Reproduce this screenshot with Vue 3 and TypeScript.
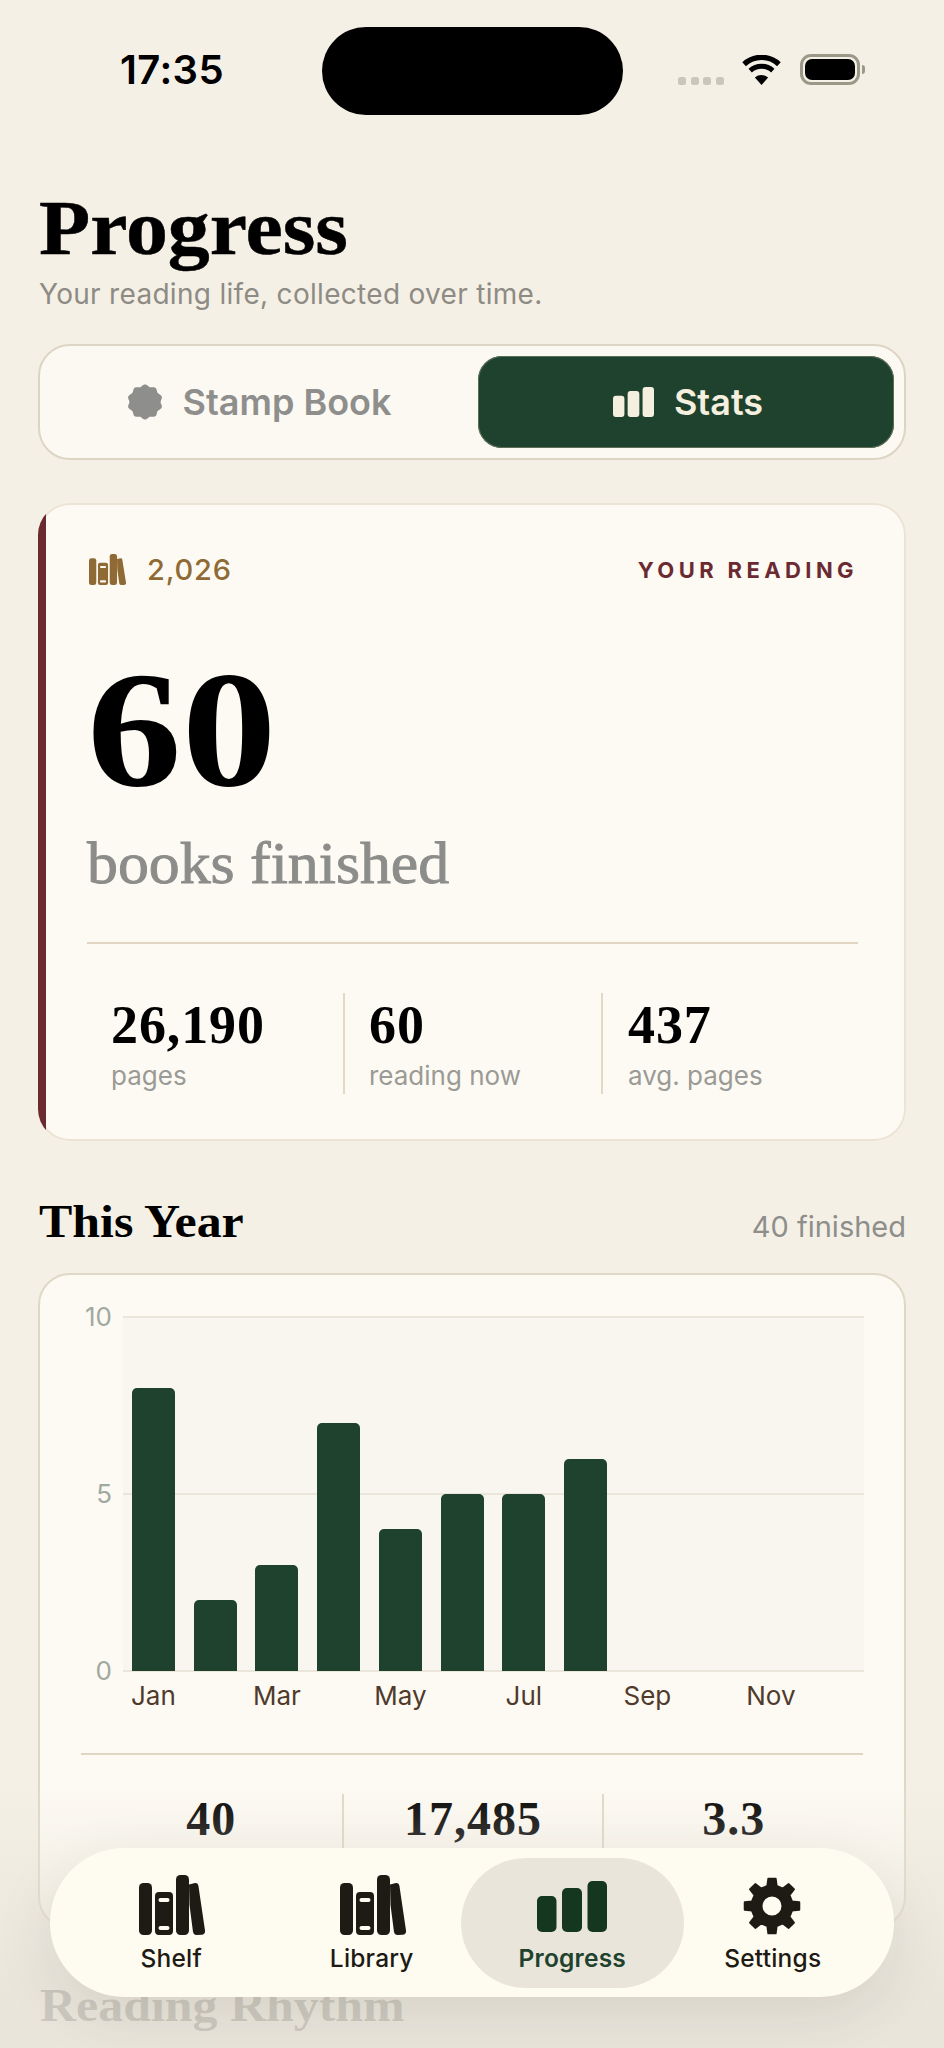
<script setup lang="ts">
import { computed } from 'vue'

const heroStats = [
  { value: '26,190', label: 'pages' },
  { value: '60', label: 'reading now' },
  { value: '437', label: 'avg. pages' },
]
const yearStats = [
  { value: '40', label: 'books' },
  { value: '17,485', label: 'pages' },
  { value: '3.3', label: 'per month' },
]
const months = ['Jan', '', 'Mar', '', 'May', '', 'Jul', '', 'Sep', '', 'Nov', '']
const counts = [8, 2, 3, 7, 4, 5, 5, 6, 0, 0, 0, 0]
const yTicks = ['10', '5', '0']

const sealPath = computed(() => {
  const pts: string[] = []
  const n = 160
  for (let i = 0; i < n; i++) {
    const a = (i / n) * Math.PI * 2 - Math.PI / 2
    const r = 16.6 + 1.0 * Math.cos(10 * (a + Math.PI / 2))
    pts.push(`${(18 + r * Math.cos(a)).toFixed(2)} ${(18 + r * Math.sin(a)).toFixed(2)}`)
  }
  return 'M' + pts.join('L') + 'Z'
})

const gearPath = computed(() => {
  const cx = 29
  const cy = 29
  const rOut = 27.5
  const rIn = 20.5
  const teeth = 8
  const step = (Math.PI * 2) / teeth
  let d = ''
  for (let i = 0; i < teeth; i++) {
    const c = i * step - Math.PI / 2
    const seq: [number, number][] = [
      [rIn, c - step * 0.29],
      [rOut, c - step * 0.17],
      [rOut, c + step * 0.17],
      [rIn, c + step * 0.29],
    ]
    for (const [r, a] of seq) {
      const x = (cx + r * Math.cos(a)).toFixed(2)
      const y = (cy + r * Math.sin(a)).toFixed(2)
      d += (d === '' ? 'M' : 'L') + x + ' ' + y
    }
  }
  d += 'Z'
  const h = 10.5
  d += `M${cx - h} ${cy}a${h} ${h} 0 1 0 ${h * 2} 0a${h} ${h} 0 1 0 ${-h * 2} 0Z`
  return d
})
</script>

<template>
  <div class="screen">
    <svg class="defs" width="0" height="0" aria-hidden="true">
      <symbol id="books" viewBox="0 0 66 60" preserveAspectRatio="none">
        <rect x="0" y="8" width="13" height="52" rx="4.5" />
        <path fill-rule="evenodd" d="M20 17h10a4 4 0 0 1 4 4v35a4 4 0 0 1-4 4H20a4 4 0 0 1-4-4V21a4 4 0 0 1 4-4ZM21.5 23a1.5 1.5 0 0 0 0 4h7a1.5 1.5 0 0 0 0-4ZM21.5 51a1.5 1.5 0 0 0 0 4h7a1.5 1.5 0 0 0 0-4Z" />
        <rect x="37" y="0" width="13" height="60" rx="4.5" />
        <path d="M50 9.5l6-1.4a3 3 0 0 1 3.4 2.6L66 55.6a3.6 3.6 0 0 1-3.3 4.2l-5 .2a3.5 3.5 0 0 1-3.7-3L50.5 30Z" />
      </symbol>
      <symbol id="bars" viewBox="0 0 70 51" preserveAspectRatio="none">
        <rect x="0" y="15" width="19.5" height="36" rx="5" />
        <rect x="25" y="7" width="20" height="44" rx="5" />
        <rect x="50.5" y="0" width="19.5" height="51" rx="5" />
      </symbol>
    </svg>

    <header class="status">
      <div class="time">17:35</div>
      <div class="island"></div>
      <div class="indicators">
        <div class="signal"><i></i><i></i><i></i><i></i></div>
        <svg class="wifi" viewBox="0 0 40 30">
          <path d="M20 30 13.4 22.6a10 10 0 0 1 13.2 0Z" fill="#000" />
          <path d="M8.7 15.6a17 17 0 0 1 22.6 0" fill="none" stroke="#000" stroke-width="5" />
          <path d="M2.6 9.2a25.6 25.6 0 0 1 34.8 0" fill="none" stroke="#000" stroke-width="5.4" />
        </svg>
        <div class="battery"><span class="cell"></span></div>
        <span class="nub"></span>
      </div>
    </header>

    <main class="page">
      <h1 class="title">Progress</h1>
      <p class="subtitle">Your reading life, collected over time.</p>

      <div class="segment">
        <div class="seg-item">
          <svg class="seg-icon" viewBox="0 0 36 36"><path :d="sealPath" fill="currentColor" /></svg>
          <span>Stamp Book</span>
        </div>
        <div class="seg-item active">
          <svg class="seg-bars"><use href="#bars" /></svg>
          <span>Stats</span>
        </div>
      </div>

      <section class="hero">
        <div class="hero-top">
          <div class="year">
            <svg class="year-icon"><use href="#books" /></svg>
            <span>2,026</span>
          </div>
          <div class="eyebrow">YOUR READING</div>
        </div>
        <div class="big">60</div>
        <div class="big-label">books finished</div>
        <div class="rule"></div>
        <div class="hero-stats">
          <div v-for="s in heroStats" :key="s.label" class="hero-stat">
            <div class="hero-value">{{ s.value }}</div>
            <div class="hero-label">{{ s.label }}</div>
          </div>
        </div>
      </section>

      <div class="section-head">
        <h2 class="section-title">This Year</h2>
        <span class="section-meta">40 finished</span>
      </div>

      <section class="chart-card">
        <div class="chart">
          <div class="y-axis">
            <span v-for="t in yTicks" :key="t">{{ t }}</span>
          </div>
          <div class="plot">
            <i class="line l1"></i><i class="line l2"></i><i class="line l3"></i>
            <div class="bars">
              <div v-for="(c, i) in counts" :key="i" class="slot">
                <div class="bar" :style="{ height: (c / 10) * 100 + '%' }"></div>
              </div>
            </div>
          </div>
        </div>
        <div class="months">
          <span v-for="(m, i) in months" :key="i" class="month">{{ m }}</span>
        </div>
        <div class="rule chart-rule"></div>
        <div class="year-stats">
          <div v-for="s in yearStats" :key="s.value" class="year-stat">
            <div class="year-value">{{ s.value }}</div>
            <div class="year-label">{{ s.label }}</div>
          </div>
        </div>
      </section>

      <h2 class="section-title rhythm">Reading Rhythm</h2>
    </main>

    <div class="fade"></div>

    <nav class="tabbar">
      <div class="tab">
        <svg class="tab-books"><use href="#books" /></svg>
        <span>Shelf</span>
      </div>
      <div class="tab">
        <svg class="tab-books"><use href="#books" /></svg>
        <span>Library</span>
      </div>
      <div class="tab current">
        <svg class="tab-bars"><use href="#bars" /></svg>
        <span>Progress</span>
      </div>
      <div class="tab">
        <svg class="tab-gear" viewBox="0 0 58 58">
          <path :d="gearPath" fill="currentColor" fill-rule="evenodd" stroke="currentColor" stroke-width="2" stroke-linejoin="round" />
        </svg>
        <span>Settings</span>
      </div>
    </nav>
  </div>
</template>

<style>
html, body { margin: 0; background: #f4f0e6; }
</style>

<style scoped>
.screen {
  position: relative;
  width: 944px;
  height: 2048px;
  overflow: hidden;
  background: #f4f0e6;
  color: #000;
  font-family: Inter, "Noto Sans", sans-serif;
}
.defs { position: absolute; }
svg use { fill: currentColor; }

.status {
  display: grid;
  grid-template-columns: 322px 301px 1fr;
  padding-top: 27px;
}
.time {
  padding: 20px 0 0 120px;
  font-size: 40px;
  line-height: 46px;
  font-weight: 600;
  letter-spacing: 0.4px;
}
.island { height: 88px; border-radius: 44px; background: #000; }
.indicators {
  display: flex;
  align-items: flex-start;
  padding: 27px 0 0 55px;
}
.signal { display: flex; gap: 4.5px; margin-top: 23px; }
.signal i { width: 8px; height: 8px; border-radius: 2.5px; background: #c9c7bc; }
.wifi { width: 41px; height: 30px; margin-left: 17px; margin-top: 1px; }
.battery {
  box-sizing: border-box;
  width: 60px;
  height: 31px;
  margin-left: 18px;
  border: 3px solid #9c9888;
  border-radius: 11px;
  padding: 2px;
}
.cell { display: block; height: 100%; border-radius: 7px; background: #000; }
.nub {
  width: 3px;
  height: 9px;
  margin: 11px 0 0 2px;
  border-radius: 0 3px 3px 0;
  background: #9c9888;
}

.page { padding: 68px 38px 0 38px; }
.title {
  margin: 0 0 0 1px;
  font-family: "Liberation Serif", serif;
  font-size: 78px;
  line-height: 90px;
  font-weight: 700;
  -webkit-text-stroke: 0.5px #000;
  transform: scaleX(1.075);
  transform-origin: left center;
}
.subtitle {
  margin: 4px 0 0 1px;
  font-size: 28px;
  line-height: 34px;
  letter-spacing: 0.3px;
  color: #8e8b84;
}

.segment {
  box-sizing: border-box;
  display: grid;
  grid-template-columns: 1fr 1fr;
  gap: 13px;
  height: 116px;
  margin-top: 33px;
  padding: 10px 10px 10px 9px;
  border: 2px solid #ddd5c3;
  border-radius: 32px;
  background: #fcf9f2;
}
.seg-item {
  display: flex;
  align-items: center;
  justify-content: center;
  gap: 20px;
  padding-left: 4px;
  border-radius: 24px;
  font-size: 36px;
  font-weight: 600;
  color: #8e8e8c;
}
.seg-item.active { background: #1f422e; color: #f5efdf; box-shadow: 0 0 0 1px #5d6f55 inset; }
.seg-icon { width: 36px; height: 36px; }
.seg-bars { width: 41px; height: 30px; }

.hero {
  position: relative;
  box-sizing: border-box;
  height: 638px;
  margin-top: 43px;
  padding: 49px 48px 0 49px;
  overflow: hidden;
  border-radius: 32px;
  background: #fdfaf3;
  box-shadow: inset 0 0 0 2px #ebe4d5;
}
.hero::before {
  content: "";
  position: absolute;
  left: 0;
  top: 0;
  bottom: 0;
  width: 8px;
  background: #6a2a2f;
}
.hero-top { display: flex; justify-content: space-between; align-items: center; }
.year { display: flex; align-items: center; gap: 21px; color: #8f6a35; font-size: 29px; font-weight: 500; letter-spacing: 0.8px; }
.year-icon { width: 37px; height: 31px; margin-left: 2px; }
.eyebrow {
  font-size: 22px;
  font-weight: 700;
  letter-spacing: 4.4px;
  color: #6b2a32;
}
.big {
  margin-top: 53px;
  font-family: "Liberation Serif", serif;
  font-size: 165px;
  line-height: 180px;
  font-weight: 700;
  transform: scaleX(1.148);
  transform-origin: left center;
}
.big-label {
  margin-top: 8px;
  font-family: "Liberation Serif", serif;
  font-size: 60px;
  line-height: 70px;
  color: #8c8c8a;
  -webkit-text-stroke: 0.9px #8c8c8a;
  transform: scaleX(1.03);
  transform-origin: left center;
}
.rule { height: 2px; background: #dfd5c2; }
.hero .rule { margin-top: 44px; }
.hero-stats { display: grid; grid-template-columns: 256px 258px 1fr; margin-top: 49px; height: 101px; }
.hero-stat { padding: 2px 0 0 24px; }
.hero-stat:last-child { padding-left: 25px; }
.hero-stat + .hero-stat { border-left: 2px solid #e2d8c6; }
.hero-value {
  font-family: "Liberation Serif", serif;
  font-size: 54px;
  line-height: 60px;
  font-weight: 700;
  letter-spacing: 0.9px;
}
.hero-label { margin-top: 5px; font-size: 26px; line-height: 32px; color: #9a9a96; }

.section-head {
  display: flex;
  justify-content: space-between;
  align-items: baseline;
  margin-top: 54px;
  padding-left: 1px;
}
.section-title {
  margin: 0;
  font-family: "Liberation Serif", serif;
  font-size: 46px;
  line-height: 54px;
  font-weight: 700;
  transform: scaleX(1.085);
  transform-origin: left center;
}
.section-meta { font-size: 29px; line-height: 34px; color: #8e8e8a; }

.chart-card {
  box-sizing: border-box;
  margin-top: 24px;
  padding: 41px 41px 33px 41px;
  border: 2px solid #e0d8c6;
  border-radius: 32px;
  background: #fdfaf3;
}
.chart { display: grid; grid-template-columns: 31px 741px; column-gap: 10.5px; }
.y-axis {
  display: flex;
  flex-direction: column;
  justify-content: space-between;
  align-items: flex-end;
  height: 356px;
  font-size: 26px;
  color: #a0a99f;
}
.y-axis span { height: 2px; line-height: 2px; }
.plot { position: relative; height: 356px; background: #f9f6ef; }
.line { position: absolute; left: 0; right: 0; height: 2px; background: #ebe6da; }
.l1 { top: 0; }
.l2 { top: 177px; }
.l3 { bottom: 0; }
.bars {
  position: absolute;
  inset: 1px 0;
  display: grid;
  grid-template-columns: repeat(12, 1fr);
}
.slot { display: flex; align-items: flex-end; justify-content: center; }
.bar { width: 43px; border-radius: 5px 5px 0 0; background: #1f422e; }
.months {
  display: grid;
  grid-template-columns: repeat(12, 61.75px);
  margin: 8px 0 0 41.5px;
}
.month {
  display: flex;
  justify-content: center;
  white-space: nowrap;
  font-size: 26px;
  line-height: 32px;
  color: #4f3a2c;
}
.chart-rule { margin-top: 41px; }
.year-stats { display: grid; grid-template-columns: repeat(3, 1fr); margin-top: 39px; height: 100px; }
.year-stat { padding-top: 3px; text-align: center; }
.year-stat + .year-stat { border-left: 2px solid #e2d8c6; }
.year-value {
  font-family: "Liberation Serif", serif;
  font-size: 48px;
  line-height: 44px;
  font-weight: 700;
  letter-spacing: 1px;
}
.year-label { margin-top: 10px; font-size: 26px; line-height: 32px; color: #9a9a96; }
.rhythm { margin-top: 50px; margin-left: 2px; }

.fade {
  position: absolute;
  left: 0;
  right: 0;
  top: 1780px;
  bottom: 0;
  background: linear-gradient(to bottom, rgba(232, 228, 218, 0), rgba(232, 228, 218, 0.88) 80%);
  pointer-events: none;
}

.tabbar {
  position: absolute;
  left: 50px;
  top: 1848px;
  box-sizing: border-box;
  display: grid;
  grid-template-columns: repeat(4, 1fr);
  width: 844px;
  height: 149px;
  padding: 10px 21px 9px;
  border-radius: 74px;
  background: #fefbf1;
  box-shadow: 0 18px 60px rgba(60, 50, 30, 0.1);
}
.tab {
  display: flex;
  flex-direction: column;
  align-items: center;
  color: #1e1a14;
  font-size: 24.5px;
  line-height: 28px;
  font-weight: 500;
  letter-spacing: 0.2px;
}
.tab span { margin-top: 9px; }
.tab-books { width: 66px; height: 60px; margin: 17px 0 0 2px; }
.tab-gear { width: 58px; height: 58px; margin: 19px 2px 0 0; }
.tab.current {
  margin: 0 -11px;
  border-radius: 65px;
  background: #e9e5da;
  color: #1f422e;
  font-weight: 600;
}
.tab-bars { width: 70px; height: 51px; margin-top: 23px; color: #15371f; }
.tab.current span { margin-top: 12px; }
</style>
